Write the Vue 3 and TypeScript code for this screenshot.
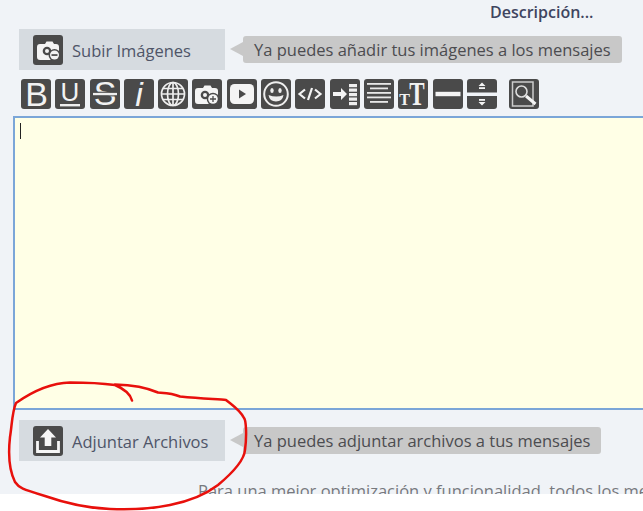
<script setup lang="ts">
const noteText = 'Para una mejor optimización y funcionalidad, todos los mensajes';
</script>

<template>
  <div class="page">
    <div class="panel">
      <div class="title-row"><span class="title">Descripción...</span></div>

      <div class="upload-row">
        <button class="upload" type="button">
          <svg class="icon" viewBox="0 0 30 30">
            <rect width="30" height="30" rx="3" fill="#4a4a4a" />
            <path d="M4 12q0-3 3-3h5l1.500-2.500h6l1.500 2.500h2q3 0 3 3v10q0 3-3 3h-16q-3 0-3-3z" fill="#f4f4f4" />
            <circle cx="14" cy="16" r="4.300" fill="#4a4a4a" />
            <circle cx="14" cy="16" r="2" fill="#f4f4f4" />
            <circle cx="21.500" cy="20" r="6" fill="#4a4a4a" />
            <circle cx="21.500" cy="20" r="4.500" fill="#f4f4f4" />
            <rect x="18.500" y="19.200" width="6" height="1.700" fill="#4a4a4a" />
          </svg>
          <span>Subir Imágenes</span>
        </button>
        <div class="tip"><span>Ya puedes añadir tus imágenes a los mensajes</span></div>
      </div>

      <div class="toolbar">
        <svg class="icon" viewBox="0 0 30 30"><rect width="30" height="30" rx="3" fill="#4a4a4a" /><text x="15.500" y="27" class="glyph" text-anchor="middle">B</text></svg>
        <svg class="icon" viewBox="0 0 30 30"><rect width="30" height="30" rx="3" fill="#4a4a4a" /><text x="15" y="22" class="glyph mid" text-anchor="middle">U</text><rect x="5" y="25" width="20" height="2.400" fill="#eee" /></svg>
        <svg class="icon" viewBox="0 0 30 30"><rect width="30" height="30" rx="3" fill="#4a4a4a" /><text x="15" y="26" class="glyph" text-anchor="middle">S</text><rect x="2" y="12.700" width="26" height="1.200" fill="#4a4a4a" /><rect x="2" y="16.200" width="26" height="1.200" fill="#4a4a4a" /><rect x="3" y="13.900" width="24" height="2.300" fill="#eee" /></svg>
        <svg class="icon" viewBox="0 0 30 30"><rect width="30" height="30" rx="3" fill="#4a4a4a" /><text x="15" y="26.500" class="glyph slant" text-anchor="middle">i</text></svg>
        <svg class="icon" viewBox="0 0 30 30"><rect width="30" height="30" rx="3" fill="#4a4a4a" /><g fill="none" stroke="#eee" stroke-width="1.700"><circle cx="15" cy="15" r="11.500" /><ellipse cx="15" cy="15" rx="5.500" ry="11.500" /><path d="M15 3.500v23M3.500 15h23M5 9.500h20M5 20.500h20" /></g></svg>
        <svg class="icon" viewBox="0 0 30 30">
          <rect width="30" height="30" rx="3" fill="#4a4a4a" />
          <path d="M3 12q0-3 3-3h5l1.500-2.500h6l1.500 2.500h3q3 0 3 3v10q0 3-3 3h-17q-3 0-3-3z" fill="#f4f4f4" />
          <circle cx="13" cy="16" r="4.300" fill="#4a4a4a" /><circle cx="13" cy="16" r="2" fill="#f4f4f4" />
          <circle cx="21" cy="20" r="6.300" fill="#4a4a4a" /><circle cx="21" cy="20" r="4.800" fill="#f4f4f4" />
          <path d="M18 20h6M21 17v6" stroke="#4a4a4a" stroke-width="1.300" />
        </svg>
        <svg class="icon" viewBox="0 0 30 30"><rect width="30" height="30" rx="3" fill="#4a4a4a" /><rect x="3" y="5" width="24" height="20" rx="4.500" fill="#f4f4f4" /><path d="M12 10.500l7 4.500-7 4.500z" fill="#4a4a4a" /></svg>
        <svg class="icon" viewBox="0 0 30 30"><rect width="30" height="30" rx="3" fill="#4a4a4a" /><circle cx="15" cy="15" r="11.800" fill="none" stroke="#eee" stroke-width="2" /><ellipse cx="11" cy="11.500" rx="1.700" ry="2.500" fill="#eee" /><ellipse cx="19" cy="11.500" rx="1.700" ry="2.500" fill="#eee" /><path d="M7.500 16q1 6.500 7.500 6.500t7.500-6.500q-7 3-15 0z" fill="#eee" /></svg>
        <svg class="icon" viewBox="0 0 30 30"><rect width="30" height="30" rx="3" fill="#4a4a4a" /><path d="M10 10.500l-5.500 4.500 5.500 4.500M20 10.500l5.500 4.500-5.500 4.500M17 9l-4 12" fill="none" stroke="#f4f4f4" stroke-width="2.200" /></svg>
        <svg class="icon" viewBox="0 0 30 30"><rect width="30" height="30" rx="3" fill="#4a4a4a" /><path d="M3 13h8V9l6 6-6 6v-4H3z" fill="#f4f4f4" /><g fill="#eee"><rect x="19" y="5" width="8" height="3.200" /><rect x="19" y="9.500" width="8" height="3.200" /><rect x="19" y="14" width="8" height="3.200" /><rect x="19" y="18.500" width="8" height="3.200" /><rect x="19" y="23" width="8" height="3.200" /></g></svg>
        <svg class="icon" viewBox="0 0 30 30"><rect width="30" height="30" rx="3" fill="#4a4a4a" /><g fill="#e8e8e8"><rect x="3" y="4" width="24" height="1.800" /><rect x="6" y="8.500" width="18" height="1.800" /><rect x="3" y="13" width="24" height="1.800" /><rect x="3" y="17.500" width="24" height="1.800" /><rect x="6" y="22" width="18" height="1.800" /></g></svg>
        <svg class="icon" viewBox="0 0 30 30"><rect width="30" height="30" rx="3" fill="#4a4a4a" /><text x="6.500" y="25.500" class="glyph serif small" text-anchor="middle">T</text><text transform="translate(19 25.500) scale(.72 1.050)" class="glyph serif" text-anchor="middle">T</text></svg>
        <svg class="icon" viewBox="0 0 30 30"><rect width="30" height="30" rx="3" fill="#4a4a4a" /><rect x="2.500" y="12.800" width="25" height="4.400" fill="#f4f4f4" /></svg>
        <svg class="icon" viewBox="0 0 30 30">
          <path d="M3 0h24q3 0 3 3v10.500H0V3q0-3 3-3zM0 17h30v10q0 3-3 3H3q-3 0-3-3z" fill="#4a4a4a" />
          <path d="M15 3.500l3.500 3.500h-7zM15 26.500l3.500-3.500h-7z" fill="#f4f4f4" />
          <rect x="12" y="8.200" width="6" height="1.800" fill="#f4f4f4" /><rect x="12" y="20" width="6" height="1.800" fill="#f4f4f4" />
        </svg>
        <svg class="icon search" viewBox="0 0 30 30">
          <rect width="30" height="30" rx="3" fill="#4a4a4a" />
          <rect x="3.500" y="3" width="20.500" height="24" fill="none" stroke="#ccc" stroke-width="1.500" />
          <circle cx="12.500" cy="12.500" r="5.500" fill="none" stroke="#ddd" stroke-width="1.600" />
          <path d="M17 17l9.500 8" stroke="#f4f4f4" stroke-width="3" />
        </svg>
      </div>

      <div class="editor"><i class="caret"></i></div>

      <div class="upload-row">
        <button class="upload" type="button">
          <svg class="icon" viewBox="0 0 30 30">
            <rect width="30" height="30" rx="3" fill="#4a4a4a" />
            <path d="M15 3l8 8.500h-4.700V20h-6.600v-8.500H7z" fill="#f6f6f6" />
            <path d="M4.500 15v10.500h21V15" fill="none" stroke="#f6f6f6" stroke-width="2.800" />
          </svg>
          <span>Adjuntar Archivos</span>
        </button>
        <div class="tip"><span>Ya puedes adjuntar archivos a tus mensajes</span></div>
      </div>

      <p class="note">{{ noteText }}</p>
    </div>

    <svg class="scribble" viewBox="0 0 643 511" width="643" height="511">
      <path d="M132 400.500C130 392 122 388 115 385C100 383 85 382.500 70 382.500C50 383 33 391 16 403C12 412 12 425 10 437C8 455 9 470 15 482C19 488 22 489 45 496C65 503 85 508 110 509C130 510 150 509 170 505C190 501 205 495 218 485C230 475 244 462 245 450C247 435 246 420 244 418C240 410 232 405 226 400C220 399 205 399 180 396.500C172 393 165 393 158 392.500C150 389 135 385 115 384.500" fill="none" stroke="#e8100c" stroke-width="2.500" stroke-linecap="round" stroke-linejoin="round" />
    </svg>
  </div>
</template>

<style>
html, body { margin: 0; background: #fff; }
</style>

<style scoped>
.page {
  position: relative;
  width: 643px;
  height: 511px;
  overflow: hidden;
  background: #fff;
  font-family: "Open Sans", "Noto Sans", sans-serif;
  color: #4a5060;
}
.panel { height: 494px; overflow: hidden; background: #f0f3f7; }
.title-row { height: 29px; padding-left: 490px; box-sizing: border-box; white-space: nowrap; }
.title { display: block; padding-top: 2px; font-size: 16px; line-height: 20px; font-weight: 600; color: #3f4560; }
.upload-row { display: flex; align-items: center; padding-left: 19px; height: 41px; }
.upload {
  display: flex; align-items: center; gap: 9px;
  width: 206px; height: 41px; padding: 0 0 0 14px; box-sizing: border-box;
  border: 0; background: #d6dbe0; color: #4f5568;
  font: 400 16.500px/20px "Open Sans", sans-serif;
}
.upload span { position: relative; top: 1px; }
.icon { display: block; width: 30px; height: 30px; flex: none; overflow: visible; }
.tip {
  position: relative; margin-left: 18px; height: 27px; padding: 0 11px; border-radius: 3px;
  background: #c8c8c8; color: #4c4c50; font-size: 16.500px; line-height: 27px; white-space: nowrap;
}
.tip::before {
  content: ""; position: absolute; left: -13px; top: 6px;
  border-style: solid; border-width: 7.500px 13px 7.500px 0;
  border-color: transparent #c8c8c8 transparent transparent;
}
.toolbar { display: flex; gap: 4.300px; padding: 9px 0 0 21px; height: 30px; }
.search { margin-left: 7.500px; }
.glyph { fill: #f2f2f2; font-family: "Liberation Sans", sans-serif; font-size: 34px; }
.mid { font-size: 26px; }
.slant { font-style: italic; font-size: 34px; }
.serif { font-family: "Liberation Serif", serif; font-weight: 700; font-size: 32px; }
.small { font-size: 16px; }
.editor {
  position: relative; margin: 7px 0 10px 13px; height: 294px; box-sizing: border-box;
  border: 2px solid #7ba6d8; border-right: 0; background: #ffffe6;
}
.caret { position: absolute; left: 5px; top: 5px; width: 1px; height: 16px; background: #222; }
.note {
  margin: 19px 0 0; padding-left: 198px; white-space: nowrap;
  font-size: 16.500px; line-height: 22px; color: #77797e;
}
.scribble { position: absolute; left: 0; top: 0; pointer-events: none; }
</style>
